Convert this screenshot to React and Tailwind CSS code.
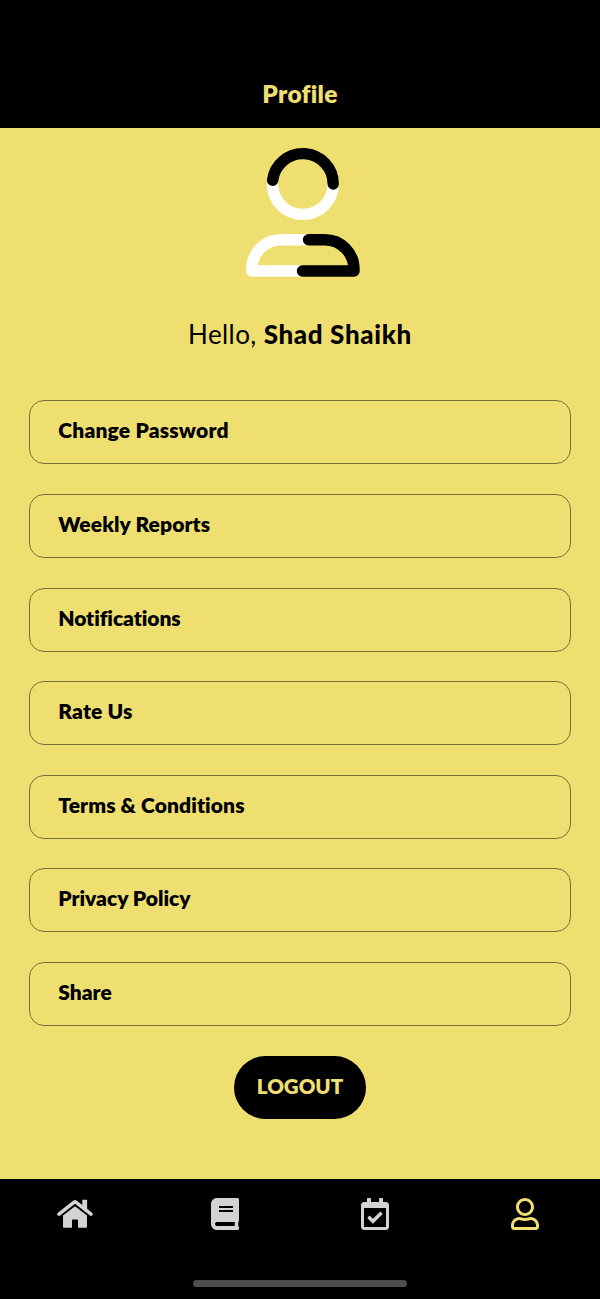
import React from "react";
import { FaBook, FaRegCalendarCheck, FaRegUser } from "react-icons/fa";

const items = [
  { label: "Change Password", tracking: "tracking-[0.2px]" },
  { label: "Weekly Reports", tracking: "tracking-[0.1px]" },
  { label: "Notifications", tracking: "tracking-[-0.05px]" },
  { label: "Rate Us", tracking: "tracking-[0.15px]" },
  { label: "Terms & Conditions", tracking: "tracking-[0.1px]" },
  { label: "Privacy Policy", tracking: "tracking-[0px]" },
  { label: "Share", tracking: "tracking-[0px]" },
];

function Avatar() {
  return (
    <svg
      className="ml-[6px] block"
      width="120"
      height="136"
      viewBox="243 145 120 136"
      fill="none"
      strokeWidth="11.4"
      strokeLinecap="round"
      strokeLinejoin="round"
    >
      <g stroke="#fff">
        <path d="M272.4 184a30.4 30.4 0 0 0 60.8 0" />
        <path d="M308 239.7H281c-16.5 0-29.2 13.4-29.2 29.6v1.7H302" />
      </g>
      <g stroke="#000">
        <path d="M272.64 180.2A30.4 30.4 0 0 1 333.2 184" />
        <path d="M308.5 239.7H324.8c16.5 0 29.2 13.4 29.2 29.6v1.7H302.5" />
      </g>
    </svg>
  );
}

function HomeIcon() {
  return (
    <svg className="block" width="36" height="32" viewBox="0 0 36 32" fill="currentColor">
      <path d="M25.3 9V1.8h4.8v11Z" />
      <path
        d="M2 16.2L17.2 4.2q.8-.6 1.6 0L34 16.2"
        fill="none"
        stroke="currentColor"
        strokeWidth="3.5"
        strokeLinecap="round"
        strokeLinejoin="round"
      />
      <path d="M6 17.6L17.4 8.8q.6-.4 1.200 0L30 17.6v11.4q0 .8-.8.8H21V22.2q0-.6-.6-.6h-4.8q-.6 0-.6.6V29.8H6.8q-.8 0-.8-.8Z" />
    </svg>
  );
}

export default function App() {
  return (
    <div className="flex h-[1299px] w-[600px] flex-col overflow-hidden bg-[#efdf70] font-['Lato',sans-serif] text-black">
      <header className="flex h-[127.5px] shrink-0 items-end justify-center bg-black pb-[17px]">
        <h1 className="text-[24.5px] leading-[34px] font-extrabold tracking-[0.25px] text-[#efdf70] [font-variant-ligatures:none]">
          Profile
        </h1>
      </header>

      <main className="flex flex-1 flex-col items-center pt-[17.5px]">
        <Avatar />
        <p className="mt-[36px] h-[34px] text-[26px] leading-[34px] tracking-[0.4px] whitespace-pre">
          Hello, <span className="font-black tracking-[0.65px]">Shad Shaikh</span>
        </p>
        <ul className="mt-[49.4px] flex w-[541.5px] flex-col gap-[29.6px]">
          {items.map(({ label, tracking }) => (
            <li
              key={label}
              className="flex h-[64px] items-start rounded-[15px] border border-[#786f38] pt-[14px] pl-[28px]"
            >
              <span className={`text-[21px] leading-[30px] font-extrabold [font-variant-ligatures:none] ${tracking}`}>
                {label}
              </span>
            </li>
          ))}
        </ul>
        <button className="mt-[30px] flex h-[63.5px] w-[131.5px] items-start justify-center rounded-[32px] bg-black pt-[15px] text-[20.5px] leading-[30px] font-extrabold text-[#efdf70]">
          LOGOUT
        </button>
      </main>

      <nav className="flex h-[120.5px] shrink-0 flex-col items-center bg-black">
        <div className="grid w-full grid-cols-4 justify-items-center pt-[19.5px] text-[#d3d3d3]">
          <HomeIcon />
          <FaBook className="h-[32px] w-[28px]" />
          <FaRegCalendarCheck className="h-[32px] w-[28px]" />
          <FaRegUser className="h-[32px] w-[28px] text-[#efdf70]" />
        </div>
        <div className="mt-[49.5px] h-[7px] w-[214px] rounded-full bg-[#4d4d4d]" />
      </nav>
    </div>
  );
}
